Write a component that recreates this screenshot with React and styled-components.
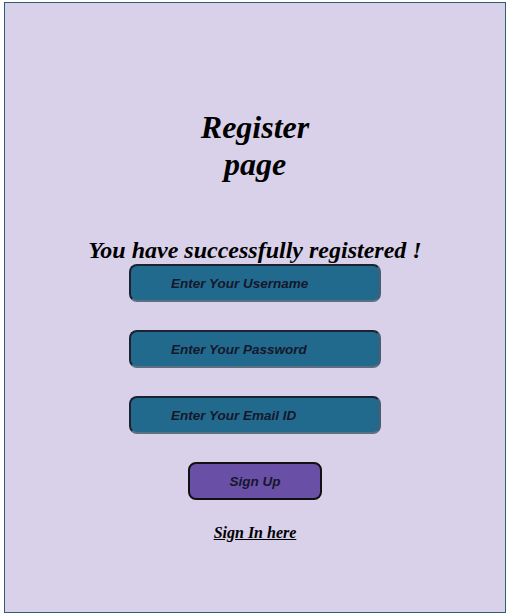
import React from "react";
import styled, { createGlobalStyle } from "styled-components";

const COLORS = {
  page: "#ffffff",
  panel: "#d9d1e9",
  panelBorder: "#2f5d73",
  field: "#216a8e",
  fieldText: "#15172b",
  button: "#6a4fa6",
  text: "#000000",
};

const GlobalStyle = createGlobalStyle`
html, body {
  margin: 0;
  padding: 0;
  background: ${COLORS.page};
}
body {
  font-family: "Liberation Serif", "Times New Roman", serif;
}
`;

const Page = styled.div`
padding: 2px 3px 2px 4px;
`;

const Panel = styled.div`
box-sizing: border-box;
height: 611px;
background: ${COLORS.panel};
border: 1px solid ${COLORS.panelBorder};

display: flex;
flex-direction: column;
align-items: center;
padding-top: 106px;
`;

const Title = styled.h1`
margin: 0;
width: 130px;
text-align: center;
font-family: "Liberation Serif", serif;
font-style: italic;
font-weight: bold;
font-size: 32px;
line-height: 37px;
color: ${COLORS.text};
`;

const Message = styled.h2`
margin: 53px 0 0 0;
font-family: "Liberation Serif", serif;
font-style: italic;
font-weight: bold;
font-size: 24px;
line-height: 28px;
color: ${COLORS.text};
`;

const Form = styled.form`
display: flex;
flex-direction: column;
align-items: center;
gap: 28px;
`;

const Field = styled.input`
box-sizing: border-box;
width: 252px;
height: 38px;
border-radius: 8px;
background: ${COLORS.field};
border: 2px solid #1c2230;
border-bottom-color: #5d6f82;
border-right-color: #4c5d70;
padding: 0 0 0 40px;
font-family: "Liberation Sans", Arial, sans-serif;
font-style: italic;
font-weight: bold;
font-size: 13.5px;
color: ${COLORS.fieldText};
outline: none;

&::placeholder {
  color: ${COLORS.fieldText};
  opacity: 1;
}
`;

const SubmitButton = styled.button`
box-sizing: border-box;
width: 134px;
height: 38px;
border-radius: 8px;
background: ${COLORS.button};
border: 2px solid #111111;
font-family: "Liberation Sans", Arial, sans-serif;
font-style: italic;
font-weight: bold;
font-size: 13.5px;
color: ${COLORS.fieldText};
cursor: pointer;
`;

const SignInLink = styled.a`
margin-top: 24px;
font-family: "Liberation Serif", serif;
font-style: italic;
font-weight: bold;
font-size: 16px;
color: ${COLORS.text};
text-decoration: underline;
cursor: pointer;
`;

export default function App() {
  return (
    <>
      <GlobalStyle />
      <Page>
        <Panel>
          <Title>Register page</Title>
          <Message>You have successfully registered !</Message>
          <Form onSubmit={(e) => e.preventDefault()}>
            <Field type="text" placeholder="Enter Your Username" />
            <Field type="password" placeholder="Enter Your Password" />
            <Field type="email" placeholder="Enter Your Email ID" />
            <SubmitButton type="submit">Sign Up</SubmitButton>
          </Form>
          <SignInLink>Sign In here</SignInLink>
        </Panel>
      </Page>
    </>
  );
}
